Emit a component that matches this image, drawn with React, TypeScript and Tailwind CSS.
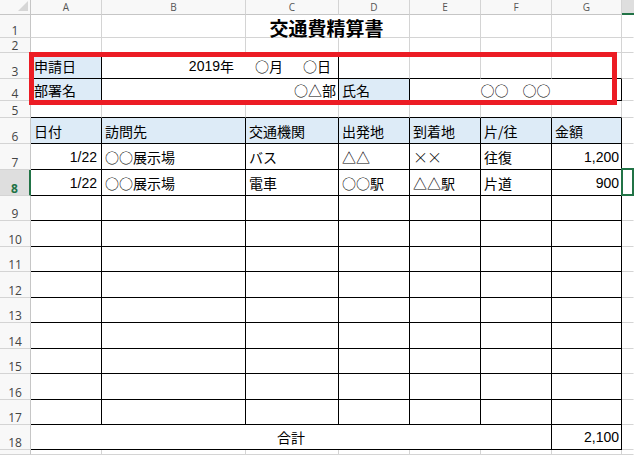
import type { ReactNode } from 'react';
import clsx from 'clsx';

type Line = 'black' | 'grid' | 'none';
type Align = 'left' | 'right' | 'center';

const rightLine: Record<Line, string> = {
  black: 'border-r border-r-black',
  grid: 'border-r border-r-[#d4d4d4]',
  none: 'border-r border-r-transparent',
};

const bottomLine: Record<Line, string> = {
  black: 'border-b border-b-black',
  grid: 'border-b border-b-[#d4d4d4]',
  none: 'border-b border-b-transparent',
};

const spanCls: Record<number, string> = {
  1: '',
  2: 'col-span-2',
  3: 'col-span-3',
  6: 'col-span-6',
  7: 'col-span-7',
};

const alignCls: Record<Align, string> = {
  left: 'justify-start pl-[3px]',
  right: 'justify-end pr-[2px]',
  center: 'justify-center',
};

const COLS = ['A', 'B', 'C', 'D', 'E', 'F', 'G'];

interface CellProps {
  children?: ReactNode;
  span?: number;
  align?: Align;
  blue?: boolean;
  r?: Line;
  b?: Line;
  className?: string;
}

function Cell({ children, span = 1, align = 'left', blue, r = 'grid', b = 'grid', className }: CellProps) {
  return (
    <div
      className={clsx(
        'flex min-w-0 items-center overflow-hidden whitespace-nowrap text-[14px] leading-none text-black',
        spanCls[span],
        alignCls[align],
        rightLine[r],
        bottomLine[b],
        blue && 'bg-[#ddebf7]',
        className
      )}
    >
      {children}
    </div>
  );
}

function ColHead({ label, selected }: { label?: string; selected?: boolean }) {
  return (
    <div
      className={clsx(
        "flex items-center justify-center font-['Open_Sans',sans-serif] text-[10px] leading-none",
        selected
          ? 'bg-[#dedede] border-b-2 border-b-[#217346] text-[#217346]'
          : 'bg-[#f8f8f8] border-r border-r-[#d4d4d4] border-b border-b-[#c6c6c6] text-[#555]'
      )}
    >
      {label}
    </div>
  );
}

function RowHead({ n, selected }: { n?: number; selected?: boolean }) {
  return (
    <div
      className={clsx(
        "flex items-end justify-center pb-[1px] font-['Open_Sans',sans-serif] text-[12px] leading-[11px] border-b border-b-[#d4d4d4]",
        selected
          ? 'bg-[#dedede] border-r-2 border-r-[#217346] font-bold text-[#217346]'
          : 'bg-[#f8f8f8] border-r border-r-[#c6c6c6] text-[#444]'
      )}
    >
      {n}
    </div>
  );
}

const Num = ({ children }: { children: ReactNode }) => (
  <span className="font-['Liberation_Sans',sans-serif]">{children}</span>
);

// full-width multiplication sign, as the sheet's font draws it
const Cross = () => (
  <span className="inline-block w-[14px] text-center text-[15px] font-light leading-none">×</span>
);

// plain row: A..G with the given borders, H empty
function PlainRow({ n, r = 'grid', b = 'grid' }: { n?: number; r?: Line; b?: Line }) {
  return (
    <>
      <RowHead n={n} />
      {COLS.map((c) => (
        <Cell key={c} r={r} b={b} />
      ))}
      <Cell r="none" />
    </>
  );
}

const trips: ReactNode[][] = [
  ['1/22', '○○展示場', 'バス', '△△', <><Cross /><Cross /></>, '往復', '1,200'],
  ['1/22', '○○展示場', '電車', '○○駅', '△△駅', '片道', '900'],
];

export default function App() {
  return (
    <div className="h-[455px] w-[634px] overflow-hidden bg-white font-['Noto_Sans_CJK_JP',sans-serif]">
      <div className="relative grid h-[455px] grid-cols-[31px_71px_144px_93px_71px_71px_71px_70px_1fr] grid-rows-[15px_23px_15px_26px_22px_17px_26px_26px_26px_25px_26px_25px_26px_25px_26px_25px_26px_25px_25px_1fr]">
        {/* column headers */}
        <div className="relative bg-[#f8f8f8] border-r border-r-[#c6c6c6] border-b border-b-[#c6c6c6]">
          <svg className="absolute right-[2px] bottom-[3px]" width="10" height="10" viewBox="0 0 10 10">
            <polygon points="10,0 10,10 0,10" fill="#d6d6d6" />
          </svg>
        </div>
        {COLS.map((c) => (
          <ColHead key={c} label={c} />
        ))}
        <ColHead selected />

        {/* 1: title */}
        <RowHead n={1} />
        <div className="relative col-span-7">
          <div className="grid h-full grid-cols-[71px_144px_93px_71px_71px_71px_70px]">
            {(['grid', 'grid', 'none', 'grid', 'grid', 'grid', 'grid'] as Line[]).map((r, i) => (
              <div key={i} className={clsx(rightLine[r], bottomLine.grid)} />
            ))}
          </div>
          <div className="absolute inset-x-0 top-[2px] bottom-0 flex items-center justify-center text-[19px] font-bold leading-none text-black">
            交通費精算書
          </div>
        </div>
        <Cell r="none" />

        <PlainRow n={2} />

        {/* 3 */}
        <RowHead n={3} />
        <Cell blue r="black" b="black">申請日</Cell>
        <Cell span={2} align="right" r="black" b="black" className="pr-[7px]">
          <Num>2019</Num>年<span className="ml-[21px]">○月</span>
          <span className="ml-[20px]">○日</span>
        </Cell>
        <Cell b="black" />
        <Cell b="black" />
        <Cell b="black" />
        <Cell b="black" />
        <Cell r="none" />

        {/* 4 */}
        <RowHead n={4} />
        <Cell blue r="black" b="black">部署名</Cell>
        <Cell span={2} align="right" r="black" b="black" className="pr-[1px]">○△部</Cell>
        <Cell blue r="black" b="black">氏名</Cell>
        <Cell span={3} align="center" r="black" b="black">○○　○○</Cell>
        <Cell r="none" />

        <PlainRow n={5} b="black" />

        {/* 6: headings */}
        <RowHead n={6} />
        {['日付', '訪問先', '交通機関', '出発地', '到着地', '片/往', '金額'].map((h) => (
          <Cell key={h} blue r="black" b="black">{h}</Cell>
        ))}
        <Cell r="none" />

        {trips.map((row, i) => (
          <div key={i} className="contents">
            <RowHead n={7 + i} selected={i === 1} />
            {row.map((v, j) =>
              j === 0 ? (
                <Cell key={j} align="right" r="black" b="black" className="pr-[4px]"><Num>{v}</Num></Cell>
              ) : j === 6 ? (
                <Cell key={j} align="right" r="black" b="black" className="pr-[1px]"><Num>{v}</Num></Cell>
              ) : (
                <Cell key={j} r="black" b="black" className="pl-[2px]">{v}</Cell>
              )
            )}
            {i === 1 ? (
              <div className="relative border-b border-b-[#d4d4d4]">
                <div className="absolute -left-px -top-[2px] -bottom-px right-0 border-2 border-[#217346]" />
              </div>
            ) : (
              <Cell r="none" />
            )}
          </div>
        ))}

        {[9, 10, 11, 12, 13, 14, 15, 16, 17].map((n) => (
          <PlainRow key={n} n={n} r="black" b="black" />
        ))}

        {/* 18: total */}
        <RowHead n={18} />
        <Cell span={6} align="center" r="black" b="black">合計</Cell>
        <Cell align="right" r="black" b="black" className="pr-[2px]"><Num>2,100</Num></Cell>
        <Cell r="none" />

        {/* 19 is only a sliver, its number falls below the window */}
        <PlainRow />

        {/* highlight around 申請日 / 部署名 block */}
        <div className="pointer-events-none absolute left-[29px] top-[52px] h-[53px] w-[588px] border-[5px] border-[#ec1c24]" />
      </div>
    </div>
  );
}
